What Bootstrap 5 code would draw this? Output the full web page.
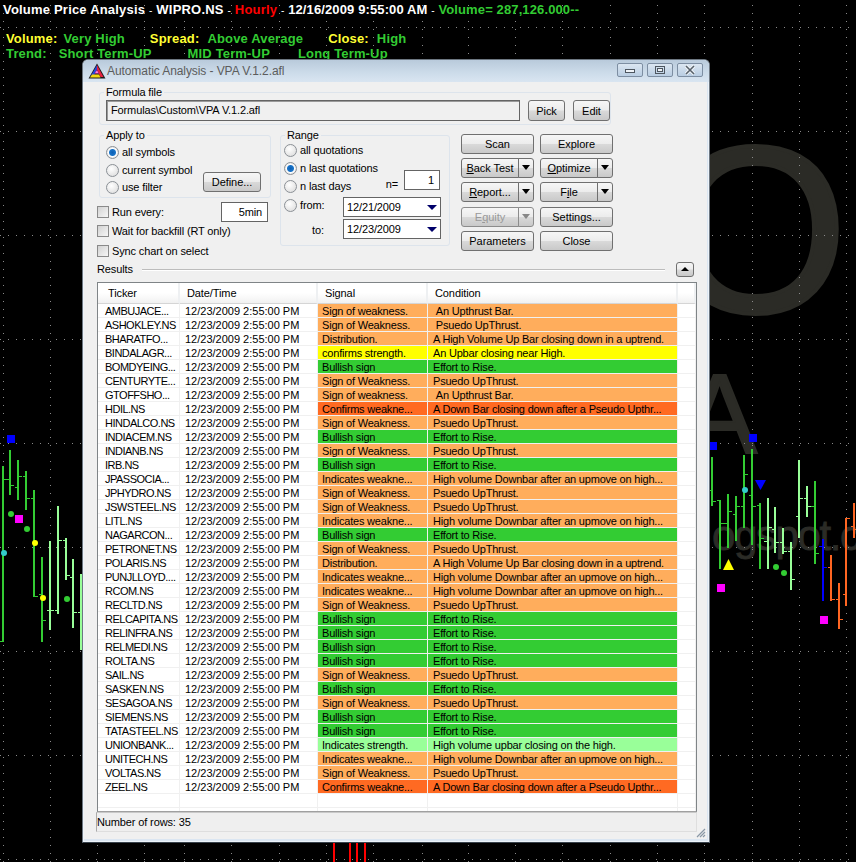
<!DOCTYPE html>
<html lang="en">
<head>
<meta charset="utf-8">
<title>Volume Price Analysis</title>
<link rel="stylesheet" href="https://cdn.jsdelivr.net/npm/bootstrap@5.3.0/dist/css/bootstrap.min.css">
<style>
html,body{height:100%;margin:0;overflow:hidden;background:#000}
body{font-family:"Liberation Sans",Arial,sans-serif;font-size:11px;line-height:14px;letter-spacing:-.13px;color:#000}
.chart-canvas{position:absolute;left:0;top:0}
.head-wrap{position:absolute;left:0;top:0;width:856px;font-weight:700;white-space:nowrap}
.head-one{padding:2px 0 0 3px;font-size:13px;line-height:15px;letter-spacing:.12px;color:#fff}
.head-one .thin{font-weight:400;font-size:10px}
.head-lead{letter-spacing:.2px}
.head-two{margin-top:13px;padding-left:6px;font-size:13px;line-height:15px;letter-spacing:.16px}
.c-red{color:#f00}.c-grn{color:#33cc33}.c-yel{color:#ffff33}
.gap-a{margin-left:6px}.gap-b{margin-left:25px}.gap-c{margin-left:8px}.gap-d{margin-left:12px}.gap-e{margin-left:36px}.gap-f{margin-left:28px}

.app-win{position:absolute;left:82px;top:59px;width:628px;height:784px;background:#dbe6f2;border:1px solid #6d7781;border-bottom-color:#38424c;border-radius:6px 6px 0 0;box-shadow:inset 0 0 0 1px rgba(255,255,255,.5)}
.win-bar{height:22px;background:linear-gradient(#b9cadb,#cddcea 60%,#d9e5f1);border-radius:5px 5px 0 0;padding:0 5px;color:#5c5c5c;font-size:12px}
.win-title{margin-left:1px;letter-spacing:-.08px}
.win-ctl{width:26px;height:14px;border:1px solid #7d8ea2;border-radius:2px;background:linear-gradient(#dbe6f1,#b9cde2);margin-left:4px;padding:0;line-height:0}
.win-ctls{margin-right:1px;margin-top:-2px}
.win-client{position:absolute;left:1px;right:2px;top:22px;bottom:3px;background:#f0f0f0}

.grp-box{position:relative;border:1px solid #dde4ec;border-radius:3px}
.grp-cap{position:absolute;left:4px;top:-8px;background:#f0f0f0;padding:0 2px;line-height:14px}
.grp-file{margin:10px 0 0 15px;width:512px;height:33px;padding:7px 0 0 6px;gap:8px}
.fld{background:#fff;border:1px solid #646464;height:21px;line-height:19px;padding:0 4px;white-space:nowrap}
.fld-file{width:414px;background:#f0f0f0;box-shadow:inset 1px 1px 0 #9a9a9a}
.fld-r{text-align:right;width:47px;height:20px;line-height:18px;padding:0 5px}
.fld-n{width:36px}
.fld-d{width:98px;height:20px;line-height:18px;padding:0 3px}
.dn-navy{display:inline-block;width:0;height:0;border:5px solid transparent;border-top:5px solid #00006a;border-bottom:0}
.xp-btn{--bs-btn-padding-x:0;--bs-btn-padding-y:0;--bs-btn-font-size:11px;--bs-btn-line-height:18px;--bs-btn-border-radius:3px;--bs-btn-color:#000;--bs-btn-border-color:#707070;--bs-btn-hover-color:#000;--bs-btn-hover-border-color:#707070;--bs-btn-disabled-color:#999;--bs-btn-disabled-border-color:#8c8c8c;--bs-btn-disabled-opacity:1;height:20px;width:73px;background:linear-gradient(#f6f6f6,#ececec 48%,#d9d9d9 52%,#c9c9c9);letter-spacing:-.05px}
.xp-btn u{text-underline-offset:1px}
.btn-pick{width:37px;height:21px}
.xp-split{width:73px;height:20px}
.xp-split .xp-btn{height:20px}
.xp-split .xp-main{width:auto;flex:1 1 auto}
.xp-split .xp-drop{width:16px;flex:0 0 16px}
.dn-blk{display:inline-block;width:0;height:0;border:4px solid transparent;border-top:5px solid #000;border-bottom:0;vertical-align:2px}
.btn[disabled] .dn-blk{border-top-color:#888}
.upper-row{margin:9px 0 0 13px;height:125px}
.col-apply{width:174px}
.grp-apply{margin:1px 0 0 2px;width:172px;height:63px;padding:7px 9px 0 6px}
.opt-row{height:18px;gap:3px;white-space:nowrap}
.opt-row.h16{height:16px}
.form-check-input.xp-radio{width:13px;height:13px;margin:0;flex:none;border:1px solid #8b9096;background:radial-gradient(circle at 40% 35%,#fff,#d8d8d8);box-shadow:none}
.form-check-input.xp-radio:checked{background:radial-gradient(circle,#0c5fb4 0,#1a74c8 3px,#fff 4px,#dcdcdc 6px)}
.form-check-input.xp-chk{width:12px;height:12px;margin:0;flex:none;border:1px solid #8a8a8a;border-radius:0;background:linear-gradient(135deg,#d2d2d2,#f6f6f6);box-shadow:none}
.chk-gap{gap:3px}
.btn-define{width:58px;margin-bottom:5px}
.chk-run{margin-top:4px;height:20px;width:171px}
.chk-wait{height:16px;margin-top:1px}
.chk-sync{height:18px;margin-top:3px}
.grp-range{margin:1px 0 0 9px;width:170px;height:111px;padding:5px 8px 0 3px}
.rng-top{height:54px}
.lbl-neq{margin-right:6px}
.rng-n{margin-bottom:4px;margin-right:1px}
.rng-from{margin-top:2px;height:20px}
.from-opt{margin-top:1px}
.rng-to{margin-top:2px;height:20px;padding-left:28px}
.to-lbl{margin-top:2px}
.btn-grid{display:grid;grid-template-columns:73px 73px;grid-template-rows:20px 20px 20px 21px 20px;column-gap:6px;row-gap:4px;margin-left:11px;align-items:end}
.res-row{margin:3px 0 0 13px;width:597px;height:15px}
.res-cap{margin-top:-2px}
.res-line{flex:1 1 auto;margin:0 11px 0 9px;height:2px;background:#bcbcbc;border-bottom:1px solid #fff}
.btn-up{width:18px;height:15px;--bs-btn-line-height:13px}
.dn-up{display:inline-block;width:0;height:0;border:4px solid transparent;border-bottom:4px solid #000;border-top:0;vertical-align:2px}
.res-box{margin:5px 0 0 13px;width:600px;height:530px;border:1px solid #7f8487;border-bottom-color:#a0a0a0;background:#fff;overflow:hidden}
.vpa-tbl.table{width:598px;table-layout:fixed;margin:0;border-collapse:separate;border-spacing:0;--bs-table-bg:transparent}
.vpa-tbl.table>*>*>*{padding:1px 0 0 5px;height:14px;line-height:12px;font-size:11px;letter-spacing:-.2px;color:#000;white-space:nowrap;overflow:hidden;border-bottom:1px solid #f0f0f0;border-right:1px solid #f0f0f0;box-shadow:none;vertical-align:top}
.vpa-tbl.table>tbody>tr>td:first-child{padding-left:7px;letter-spacing:-.5px}
.vpa-tbl.table>tbody>tr>td:nth-child(2){letter-spacing:0}
.vpa-tbl.table>thead>tr>th{height:21px;line-height:19px;font-weight:400;padding:1px 0 0 7px;letter-spacing:-.1px;background:linear-gradient(#fff,#fff 50%,#f1f1f1);border-bottom:1px solid #d5d5d5;border-right:2px solid #eef0f2}
.vpa-tbl.table>thead>tr>th:first-child{padding-left:10px}
.vpa-tbl.table>tbody>tr>td.sg{padding-left:4px}
.vpa-tbl.table>tbody>tr>td.cd{padding-left:5px}
.vpa-tbl.table>tbody>tr.t-o>td:nth-child(3),.vpa-tbl.table>tbody>tr.t-o>td:nth-child(4){background:#ffad5c}
.vpa-tbl.table>tbody>tr.t-g>td:nth-child(3),.vpa-tbl.table>tbody>tr.t-g>td:nth-child(4){background:#33cc33}
.vpa-tbl.table>tbody>tr.t-y>td:nth-child(3),.vpa-tbl.table>tbody>tr.t-y>td:nth-child(4){background:#ffff00}
.vpa-tbl.table>tbody>tr.t-r>td:nth-child(3),.vpa-tbl.table>tbody>tr.t-r>td:nth-child(4){background:#ff6a22}
.vpa-tbl.table>tbody>tr.t-l>td:nth-child(3),.vpa-tbl.table>tbody>tr.t-l>td:nth-child(4){background:#99ff99}
.stat-bar{margin:0 0 0 12px;width:601px;height:20px;line-height:18px;border:1px solid #dedede;border-top-color:#c9c9c9;border-left-color:#aaa;background:#efefef;padding-left:0}
.grip{position:absolute;right:1px;bottom:1px}
</style>
</head>
<body>
<svg class="chart-canvas" width="856" height="862" xmlns="http://www.w3.org/2000/svg">
  <g font-family="Liberation Sans, Arial, sans-serif" fill="#2b2b26" stroke="#2b2b26">
    <text x="848" y="312" font-size="238" stroke-width="4" text-anchor="end">O</text>
    <text x="757" y="453" font-size="113" stroke-width="2" text-anchor="end">A</text>
    <text x="712" y="550" font-size="42" stroke-width=".8" letter-spacing="-1.4">ogspot.c</text>
  </g>
  <g fill="none" stroke="#8a8a8a" stroke-width="1" shape-rendering="crispEdges">
    <path stroke-dasharray="1 7" d="M0 27.5H856M0 131.5H856M0 235.5H856M0 339.5H856M0 443.5H856M0 547.5H856M0 651.5H856M0 755.5H856M0 859.5H856"/>
    <path stroke-dasharray="1 7" d="M3.5 5V862M50.5 5V862M97.5 5V862M144.5 5V862M184.5 5V862M231.5 5V862M279.5 5V862M326.5 5V862M373.5 5V862M422.5 5V862M468.5 5V862M515.5 5V862M562.5 5V862M610.5 5V862M657.5 5V862M704.5 5V862M752.5 5V862M799.5 5V862M846.5 5V862"/>
  </g>
  <g shape-rendering="crispEdges" fill="none">
    <path stroke="#ff0000" stroke-width="2" d="M334 843V862M350 843V862M357 843V862M365 843V862"/>
    <path stroke="#33cc33" stroke-width="2" d="M3 466V642M10 450V495M18 460V500M26 471V510M34 490V597M42 557V642M712 457V506M720 500V569M728 494V548M736 496V541M744 455V528M752 449V545M760 503V569M815 481V564"/>
    <path stroke="#33cc33" stroke-width="1" d="M0 641.500H3M3 479.500H10M8 479.500H10M10 485.500H14M15 487.500H18M18 476.500H22M23 476.500H26M26 498.500H30M31 498.500H34M34 596.500H38M39 594.500H42M42 620.500H46M709 490.500H712M712 501.500H716M717 500.500H720M720 523.500H725M725 523.500H728M728 511.500H732M733 514.500H736M736 506.500H740M741 506.500H744M744 474.500H748M749 495.500H752M752 506.500H756M757 505.500H760M760 538.500H764M811 506.500H815M815 553.500H819"/>
    <path stroke="#99ff99" stroke-width="2" d="M50 541V630M58 506V614M66 538V580M73 559V628M81 574V650M768 498V569M775 507V553M783 528V554M791 542V590M799 460V538M807 486V517"/>
    <path stroke="#99ff99" stroke-width="1" d="M47 610.500H50M50 610.500H54M55 610.500H58M58 540.500H62M63 540.500H66M66 575.500H70M70 577.500H73M73 612.500H77M78 612.500H81M764 541.500H768M768 527.500H772M772 529.500H775M775 542.500H779M780 542.500H783M783 551.500H787M788 551.500H791M791 579.500H795M796 516.500H799M799 498.500H803M804 498.500H807M807 506.500H811"/>
    <path stroke="#0000ff" stroke-width="2" d="M823 539V601"/>
    <path stroke="#0000ff" stroke-width="1" d="M819 546.500H823M823 567.500H827"/>
    <path stroke="#ff6622" stroke-width="2" d="M831 555V601M839 583V629M846 518V606M854 503V538"/>
    <path stroke="#ff6622" stroke-width="1" d="M828 567.500H831M831 599.500H835M836 599.500H839M839 619.500H843M843 594.500H846M846 518.500H850M851 526.500H854M854 529.500H856"/>
  </g>
  <g shape-rendering="crispEdges">
    <rect x="7" y="435" width="8" height="8" fill="#0000ff"/>
    <rect x="710" y="442" width="7" height="8" fill="#0000ff"/>
    <rect x="749" y="434" width="8" height="8" fill="#0000ff"/>
    <rect x="15" y="515" width="8" height="8" fill="#ff00ff"/>
    <rect x="717" y="584" width="8" height="8" fill="#ff00ff"/>
    <rect x="820" y="616" width="8" height="8" fill="#ff00ff"/>
  </g>
  <path fill="#0000ff" d="M755 480H766L760.500 490Z"/>
  <path fill="#ffff00" d="M728.500 559L734 570H723Z"/>
  <g fill="#33cc33"><circle cx="11" cy="514" r="3"/><circle cx="27" cy="529" r="3"/><circle cx="67" cy="599" r="3"/><circle cx="776" cy="567" r="3"/><circle cx="784" cy="573" r="3"/></g>
  <g fill="#ffff00"><circle cx="35" cy="543" r="3"/><circle cx="43" cy="598" r="3"/></g>
  <g fill="#33cccc"><circle cx="4" cy="553" r="3"/><circle cx="745" cy="490" r="3"/></g>
</svg>

<div class="head-wrap">
  <div class="head-one"><span class="head-lead">Volume Price Analysis <span class="thin">-</span> WIPRO.NS <span class="thin">-</span> <span class="c-red">Hourly</span></span> <span class="thin">-</span> 12/16/2009 9:55:00 AM <span class="thin">-</span> <span class="c-grn">Volume= 287,126.000--</span></div>
  <div class="head-two"><span class="c-yel">Volume:</span><span class="c-grn gap-a">Very High</span><span class="c-yel gap-b">Spread:</span><span class="c-grn gap-c">Above Average</span><span class="c-yel gap-b">Close:</span><span class="c-grn gap-c">High</span></div>
  <div class="head-two mt-0 c-grn"><span>Trend:</span><span class="gap-d">Short Term-UP</span><span class="gap-e">MID Term-UP</span><span class="gap-f">Long Term-Up</span></div>
</div>

<div class="app-win">
  <div class="win-bar d-flex align-items-center">
    <svg width="18" height="16" viewBox="0 0 18 16" xmlns="http://www.w3.org/2000/svg">
      <path d="M9 0.500L17.500 15.500H0.500Z" fill="#1c1c1c"/>
      <path d="M9 2L6.500 6.500L3 12.500L6 12.500L9 6.500Z" fill="#2746d8"/>
      <path d="M9 2L15.500 14L12.500 14L9 6.500Z" fill="#e8213f"/>
      <path d="M2 14.500L4 11.500H11L12.500 14.500Z" fill="#f4d80e"/>
      <path d="M7 9.500L9 7L11 10.500H7Z" fill="#f03fc0"/>
      <path d="M8 9.500L9 8.300L9.800 9.500Z" fill="#fff"/>
    </svg>
    <span class="win-title">Automatic Analysis - VPA V.1.2.afl</span>
    <div class="win-ctls ms-auto d-flex">
      <button type="button" class="win-ctl" aria-label="Minimize"><svg width="12" height="8" viewBox="0 0 12 8"><rect x="1.500" y="3.500" width="9" height="3" fill="#eef3f8" stroke="#4d5660"/></svg></button>
      <button type="button" class="win-ctl" aria-label="Maximize"><svg width="12" height="10" viewBox="0 0 12 10"><rect x="1.500" y="1.500" width="9" height="7" fill="none" stroke="#4d5660"/><rect x="3.500" y="3.500" width="5" height="3" fill="#eef3f8" stroke="#4d5660"/></svg></button>
      <button type="button" class="win-ctl" aria-label="Close"><svg width="12" height="10" viewBox="0 0 12 10"><path d="M2 1L10 9M10 1L2 9" stroke="#f4f7fa" stroke-width="3.200"/><path d="M2 1L10 9M10 1L2 9" stroke="#56606a" stroke-width="1.600"/></svg></button>
    </div>
  </div>

  <div class="win-client">
    <div class="grp-box grp-file d-flex">
      <span class="grp-cap">Formula file</span>
      <div class="fld fld-file">Formulas\Custom\VPA V.1.2.afl</div>
      <button type="button" class="btn xp-btn btn-pick">Pick</button>
      <button type="button" class="btn xp-btn btn-pick ms-n1 edit-btn">Edit</button>
    </div>

    <div class="upper-row d-flex">
      <div class="col-apply">
        <div class="grp-box grp-apply d-flex justify-content-between align-items-end">
          <span class="grp-cap">Apply to</span>
          <div class="align-self-start">
            <label class="opt-row d-flex align-items-center"><input class="form-check-input xp-radio" type="radio" name="ap" checked>all symbols</label>
            <label class="opt-row d-flex align-items-center"><input class="form-check-input xp-radio" type="radio" name="ap">current symbol</label>
            <label class="opt-row h16 d-flex align-items-center"><input class="form-check-input xp-radio" type="radio" name="ap">use filter</label>
          </div>
          <button type="button" class="btn xp-btn btn-define">Define...</button>
        </div>
        <div class="chk-run d-flex align-items-center justify-content-between">
          <label class="d-flex align-items-center chk-gap"><input class="form-check-input xp-chk" type="checkbox">Run every:</label>
          <div class="fld fld-r">5min</div>
        </div>
        <label class="chk-wait d-flex align-items-center chk-gap"><input class="form-check-input xp-chk" type="checkbox">Wait for backfill (RT only)</label>
        <label class="chk-sync d-flex align-items-center chk-gap"><input class="form-check-input xp-chk" type="checkbox">Sync chart on select</label>
      </div>

      <div class="grp-box grp-range">
        <span class="grp-cap">Range</span>
        <div class="rng-top d-flex justify-content-between align-items-end">
          <div class="align-self-start">
            <label class="opt-row d-flex align-items-center"><input class="form-check-input xp-radio" type="radio" name="rg">all quotations</label>
            <label class="opt-row d-flex align-items-center"><input class="form-check-input xp-radio" type="radio" name="rg" checked>n last quotations</label>
            <label class="opt-row d-flex align-items-center"><input class="form-check-input xp-radio" type="radio" name="rg">n last days</label>
          </div>
          <div class="rng-n d-flex align-items-center"><span class="lbl-neq mt-2">n=</span><div class="fld fld-r fld-n">1</div></div>
        </div>
        <div class="rng-from d-flex align-items-start justify-content-between">
          <label class="from-opt d-flex align-items-center chk-gap"><input class="form-check-input xp-radio" type="radio" name="rg">from:</label>
          <div class="fld fld-d d-flex align-items-center justify-content-between">12/21/2009<i class="dn-navy"></i></div>
        </div>
        <div class="rng-to d-flex align-items-center justify-content-between">
          <span class="to-lbl">to:</span>
          <div class="fld fld-d d-flex align-items-center justify-content-between">12/23/2009<i class="dn-navy"></i></div>
        </div>
      </div>

      <div class="btn-grid">
        <button type="button" class="btn xp-btn">Scan</button>
        <button type="button" class="btn xp-btn">Explore</button>
        <div class="btn-group xp-split"><button type="button" class="btn xp-btn xp-main"><u>B</u>ack Test</button><button type="button" class="btn xp-btn xp-drop" aria-label="More"><i class="dn-blk"></i></button></div>
        <div class="btn-group xp-split"><button type="button" class="btn xp-btn xp-main"><u>O</u>ptimize</button><button type="button" class="btn xp-btn xp-drop" aria-label="More"><i class="dn-blk"></i></button></div>
        <div class="btn-group xp-split"><button type="button" class="btn xp-btn xp-main"><u>R</u>eport...</button><button type="button" class="btn xp-btn xp-drop" aria-label="More"><i class="dn-blk"></i></button></div>
        <div class="btn-group xp-split"><button type="button" class="btn xp-btn xp-main">F<u>i</u>le</button><button type="button" class="btn xp-btn xp-drop" aria-label="More"><i class="dn-blk"></i></button></div>
        <div class="btn-group xp-split"><button type="button" class="btn xp-btn xp-main" disabled>E<u>q</u>uity</button><button type="button" class="btn xp-btn xp-drop" disabled aria-label="More"><i class="dn-blk"></i></button></div>
        <button type="button" class="btn xp-btn">Settings...</button>
        <button type="button" class="btn xp-btn">Parameters</button>
        <button type="button" class="btn xp-btn">Close</button>
      </div>
    </div>

    <div class="res-row d-flex align-items-center">
      <span class="res-cap">Results</span>
      <div class="res-line"></div>
      <button type="button" class="btn xp-btn btn-up" aria-label="Collapse"><i class="dn-up"></i></button>
    </div>

    <div class="res-box">
      <table class="table vpa-tbl">
        <colgroup><col style="width:82px"><col style="width:138px"><col style="width:110px"><col style="width:250px"><col style="width:18px"></colgroup>
        <thead><tr><th>Ticker</th><th>Date/Time</th><th>Signal</th><th>Condition</th><th></th></tr></thead>
        <tbody>
          <tr class="t-o"><td>AMBUJACE...</td><td>12/23/2009 2:55:00 PM</td><td class="sg">Sign of weakness.</td><td class="cd">&nbsp;An Upthrust Bar.</td><td></td></tr>
          <tr class="t-o"><td>ASHOKLEY.NS</td><td>12/23/2009 2:55:00 PM</td><td class="sg">Sign of Weakness.</td><td class="cd">&nbsp;Psuedo UpThrust.</td><td></td></tr>
          <tr class="t-o"><td>BHARATFO...</td><td>12/23/2009 2:55:00 PM</td><td class="sg">Distribution.</td><td class="cd">A High Volume Up Bar closing down in a uptrend.</td><td></td></tr>
          <tr class="t-y"><td>BINDALAGR...</td><td>12/23/2009 2:55:00 PM</td><td class="sg">confirms strength.</td><td class="cd">An Upbar closing near High.</td><td></td></tr>
          <tr class="t-g"><td>BOMDYEING...</td><td>12/23/2009 2:55:00 PM</td><td class="sg">Bullish sign</td><td class="cd">Effort to Rise.</td><td></td></tr>
          <tr class="t-o"><td>CENTURYTE...</td><td>12/23/2009 2:55:00 PM</td><td class="sg">Sign of Weakness.</td><td class="cd">Psuedo UpThrust.</td><td></td></tr>
          <tr class="t-o"><td>GTOFFSHO...</td><td>12/23/2009 2:55:00 PM</td><td class="sg">Sign of weakness.</td><td class="cd">&nbsp;An Upthrust Bar.</td><td></td></tr>
          <tr class="t-r"><td>HDIL.NS</td><td>12/23/2009 2:55:00 PM</td><td class="sg">Confirms weakne...</td><td class="cd">A Down Bar closing down after a Pseudo Upthr...</td><td></td></tr>
          <tr class="t-o"><td>HINDALCO.NS</td><td>12/23/2009 2:55:00 PM</td><td class="sg">Sign of Weakness.</td><td class="cd">Psuedo UpThrust.</td><td></td></tr>
          <tr class="t-g"><td>INDIACEM.NS</td><td>12/23/2009 2:55:00 PM</td><td class="sg">Bullish sign</td><td class="cd">Effort to Rise.</td><td></td></tr>
          <tr class="t-o"><td>INDIANB.NS</td><td>12/23/2009 2:55:00 PM</td><td class="sg">Sign of Weakness.</td><td class="cd">Psuedo UpThrust.</td><td></td></tr>
          <tr class="t-g"><td>IRB.NS</td><td>12/23/2009 2:55:00 PM</td><td class="sg">Bullish sign</td><td class="cd">Effort to Rise.</td><td></td></tr>
          <tr class="t-o"><td>JPASSOCIA...</td><td>12/23/2009 2:55:00 PM</td><td class="sg">Indicates weakne...</td><td class="cd">High volume Downbar after an upmove on high...</td><td></td></tr>
          <tr class="t-o"><td>JPHYDRO.NS</td><td>12/23/2009 2:55:00 PM</td><td class="sg">Sign of Weakness.</td><td class="cd">Psuedo UpThrust.</td><td></td></tr>
          <tr class="t-o"><td>JSWSTEEL.NS</td><td>12/23/2009 2:55:00 PM</td><td class="sg">Sign of Weakness.</td><td class="cd">Psuedo UpThrust.</td><td></td></tr>
          <tr class="t-o"><td>LITL.NS</td><td>12/23/2009 2:55:00 PM</td><td class="sg">Indicates weakne...</td><td class="cd">High volume Downbar after an upmove on high...</td><td></td></tr>
          <tr class="t-g"><td>NAGARCON...</td><td>12/23/2009 2:55:00 PM</td><td class="sg">Bullish sign</td><td class="cd">Effort to Rise.</td><td></td></tr>
          <tr class="t-o"><td>PETRONET.NS</td><td>12/23/2009 2:55:00 PM</td><td class="sg">Sign of Weakness.</td><td class="cd">Psuedo UpThrust.</td><td></td></tr>
          <tr class="t-o"><td>POLARIS.NS</td><td>12/23/2009 2:55:00 PM</td><td class="sg">Distribution.</td><td class="cd">A High Volume Up Bar closing down in a uptrend.</td><td></td></tr>
          <tr class="t-o"><td>PUNJLLOYD....</td><td>12/23/2009 2:55:00 PM</td><td class="sg">Indicates weakne...</td><td class="cd">High volume Downbar after an upmove on high...</td><td></td></tr>
          <tr class="t-o"><td>RCOM.NS</td><td>12/23/2009 2:55:00 PM</td><td class="sg">Indicates weakne...</td><td class="cd">High volume Downbar after an upmove on high...</td><td></td></tr>
          <tr class="t-o"><td>RECLTD.NS</td><td>12/23/2009 2:55:00 PM</td><td class="sg">Sign of Weakness.</td><td class="cd">Psuedo UpThrust.</td><td></td></tr>
          <tr class="t-g"><td>RELCAPITA.NS</td><td>12/23/2009 2:55:00 PM</td><td class="sg">Bullish sign</td><td class="cd">Effort to Rise.</td><td></td></tr>
          <tr class="t-g"><td>RELINFRA.NS</td><td>12/23/2009 2:55:00 PM</td><td class="sg">Bullish sign</td><td class="cd">Effort to Rise.</td><td></td></tr>
          <tr class="t-g"><td>RELMEDI.NS</td><td>12/23/2009 2:55:00 PM</td><td class="sg">Bullish sign</td><td class="cd">Effort to Rise.</td><td></td></tr>
          <tr class="t-g"><td>ROLTA.NS</td><td>12/23/2009 2:55:00 PM</td><td class="sg">Bullish sign</td><td class="cd">Effort to Rise.</td><td></td></tr>
          <tr class="t-o"><td>SAIL.NS</td><td>12/23/2009 2:55:00 PM</td><td class="sg">Sign of Weakness.</td><td class="cd">Psuedo UpThrust.</td><td></td></tr>
          <tr class="t-g"><td>SASKEN.NS</td><td>12/23/2009 2:55:00 PM</td><td class="sg">Bullish sign</td><td class="cd">Effort to Rise.</td><td></td></tr>
          <tr class="t-o"><td>SESAGOA.NS</td><td>12/23/2009 2:55:00 PM</td><td class="sg">Sign of Weakness.</td><td class="cd">Psuedo UpThrust.</td><td></td></tr>
          <tr class="t-g"><td>SIEMENS.NS</td><td>12/23/2009 2:55:00 PM</td><td class="sg">Bullish sign</td><td class="cd">Effort to Rise.</td><td></td></tr>
          <tr class="t-g"><td>TATASTEEL.NS</td><td>12/23/2009 2:55:00 PM</td><td class="sg">Bullish sign</td><td class="cd">Effort to Rise.</td><td></td></tr>
          <tr class="t-l"><td>UNIONBANK...</td><td>12/23/2009 2:55:00 PM</td><td class="sg">Indicates strength.</td><td class="cd">High volume upbar closing on the high.</td><td></td></tr>
          <tr class="t-o"><td>UNITECH.NS</td><td>12/23/2009 2:55:00 PM</td><td class="sg">Indicates weakne...</td><td class="cd">High volume Downbar after an upmove on high...</td><td></td></tr>
          <tr class="t-o"><td>VOLTAS.NS</td><td>12/23/2009 2:55:00 PM</td><td class="sg">Sign of Weakness.</td><td class="cd">Psuedo UpThrust.</td><td></td></tr>
          <tr class="t-r"><td>ZEEL.NS</td><td>12/23/2009 2:55:00 PM</td><td class="sg">Confirms weakne...</td><td class="cd">A Down Bar closing down after a Pseudo Upthr...</td><td></td></tr>
          <tr><td></td><td></td><td></td><td></td><td></td></tr>
          <tr><td></td><td></td><td></td><td></td><td></td></tr>
        </tbody>
      </table>
    </div>
    <div class="stat-bar">Number of rows: 35</div>
    <svg class="grip" width="11" height="11" viewBox="0 0 11 11"><path d="M10 2L2 10M10 5L5 10M10 8L8 10" stroke="#8a98a6" stroke-width="1.200" fill="none"/></svg>
  </div>
</div>
<script src="https://cdn.jsdelivr.net/npm/bootstrap@5.3.0/dist/js/bootstrap.bundle.min.js"></script>
</body>
</html>
